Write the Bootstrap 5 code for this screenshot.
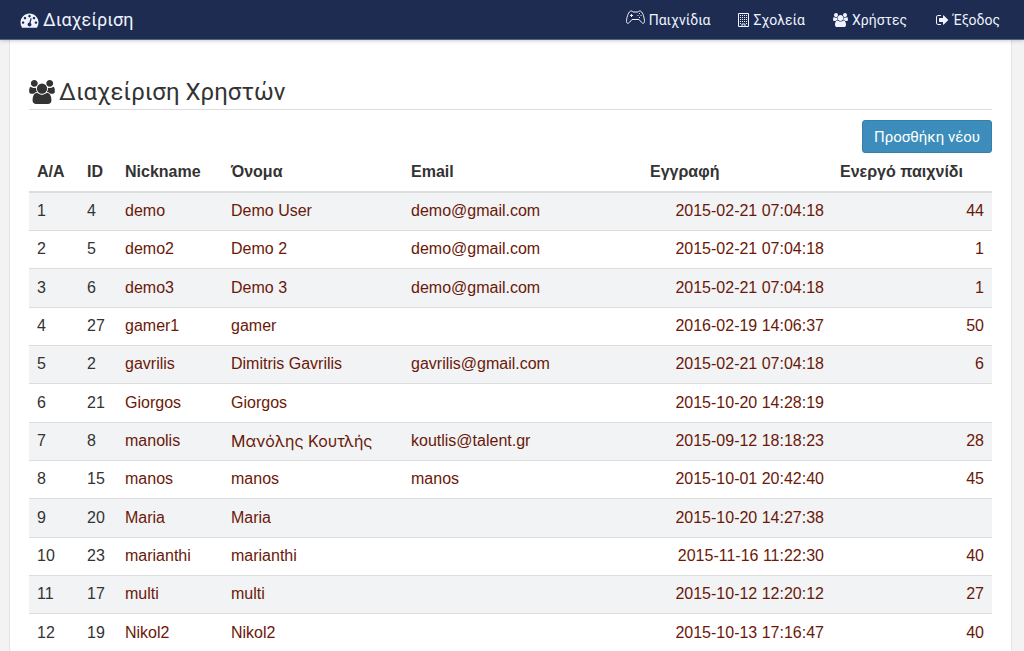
<!DOCTYPE html>
<html lang="el">
<head>
<meta charset="utf-8">
<meta name="viewport" content="width=device-width, initial-scale=1">
<title>Διαχείριση Χρηστών</title>
<link rel="stylesheet" href="https://cdn.jsdelivr.net/npm/bootstrap@5.3.0/dist/css/bootstrap.min.css">
<style>
body { background: #f3f3f3; color: #333; font: 16px/22px "Liberation Sans", Arial, sans-serif; }
svg { fill: currentColor; flex: none; }
.topbar { background: #1e2c52; height: 40px; border-bottom: 1px solid #56617f; box-shadow: 0 1px 4px rgba(0,0,0,.2); color: #eef3ff; font-family: Roboto, sans-serif; font-size: 14px; position: relative; padding: 0 24px 0 20px; }
.topbar a { color: inherit; text-decoration: none; }
.topbar .navbar-brand { font-size: 18px; line-height: 24px; }
.menu { gap: 28px; }
.sheet { background: #fff; margin: 0 12px 0 9px; padding: 35px 19px 0; border: solid #e4e4e4; border-width: 0 1px; min-height: 100vh; }
.title { font: 24px/34px Roboto, sans-serif; border-bottom: 1px solid #ddd; margin-bottom: 10px; }
.btn-add { --bs-btn-bg: #3c8dbc; --bs-btn-border-color: #367fa9; --bs-btn-color: #fff; --bs-btn-hover-color: #fff; --bs-btn-hover-bg: #367fa9; font: 15px/20px Roboto, sans-serif; padding: 6px 11px; border-radius: 3px; height: 33px; }
.users { table-layout: fixed; color: #333; --bs-table-striped-bg: #f1f3f5; --bs-table-striped-color: #333; --bs-table-color: #333; --bs-table-bg: transparent; }
.users th, .users td { padding: 0 8px; border-color: #ddd; vertical-align: middle; white-space: nowrap; }
.users thead th { height: 39px; border-bottom: 2px solid #ddd; }
.users tbody td { height: 38px; }
.users tbody tr:nth-child(3n) td { height: 39px; }
.users a { color: #6b1808; text-decoration: none; }
.users a:hover { text-decoration: underline; }
.users .greek { font-family: Inter, sans-serif; }
.c-no { width: 50px; } .c-id { width: 38px; } .c-nick { width: 106px; } .c-name { width: 180px; } .c-date { width: 190px; } .c-game { width: 160px; }
</style>
<script src="https://cdn.jsdelivr.net/npm/bootstrap@5.3.0/dist/js/bootstrap.bundle.min.js"></script>
</head>
<body>
<svg class="d-none" aria-hidden="true">
<symbol id="i-users" viewBox="0 0 1920 1792"><path d="M593 896q-162 5-265 128h-134q-82 0-138-40.5t-56-118.5q0-353 124-353 6 0 43.5 21t97.5 42.5 119 21.5q67 0 133-23-5 37-5 66 0 139 81 256zm1071 637q0 120-73 189.5t-194 69.5h-874q-121 0-194-69.5t-73-189.5q0-53 3.5-103.5t14-109 26.5-108.5 43-97.5 62-81 85.5-53.5 111.5-20q10 0 43 21.5t73 48 107 48 135 21.5 135-21.5 107-48 73-48 43-21.5q61 0 111.5 20t85.5 53.5 62 81 43 97.5 26.5 108.5 14 109 3.5 103.5zm-1024-1277q0 106-75 181t-181 75-181-75-75-181 75-181 181-75 181 75 75 181zm704 384q0 159-112.5 271.5t-271.5 112.5-271.5-112.5-112.5-271.5 112.5-271.5 271.5-112.5 271.5 112.5 112.5 271.5zm576 225q0 78-56 118.5t-138 40.5h-134q-103-123-265-128 81-117 81-256 0-29-5-66 66 23 133 23 59 0 119-21.5t97.5-42.5 43.5-21q124 0 124 353zm-128-609q0 106-75 181t-181 75-181-75-75-181 75-181 181-75 181 75 75 181z"/></symbol>
</svg>
<nav class="topbar navbar flex-nowrap">
  <a class="navbar-brand d-flex align-items-center gap-1 p-0 m-0" href="#">
    <svg width="19" height="18" viewBox="0 0 1792 1792" aria-hidden="true"><path d="M384 1152q0-53-37.500-90.500t-90.500-37.500-90.500 37.500-37.500 90.500 37.500 90.500 90.500 37.500 90.500-37.500 37.500-90.500zm192-448q0-53-37.500-90.500t-90.500-37.500-90.500 37.500-37.500 90.500 37.500 90.500 90.500 37.500 90.500-37.500 37.500-90.500zm428 481l101-382q6-26-7.500-48.500t-38.500-29.500-48 6.500-30 39.500l-101 382q-60 5-107 43.500t-63 98.500q-20 77 20 146t117 89 146-20 89-117q16-60-6-117t-72-91zm660-33q0-53-37.500-90.500t-90.500-37.500-90.500 37.500-37.500 90.500 37.500 90.500 90.500 37.500 90.500-37.500 37.500-90.500zm-640-640q0-53-37.500-90.500t-90.500-37.500-90.500 37.500-37.500 90.500 37.500 90.500 90.500 37.500 90.500-37.500 37.500-90.500zm448 192q0-53-37.500-90.500t-90.500-37.500-90.500 37.500-37.500 90.500 37.500 90.500 90.500 37.500 90.500-37.500 37.500-90.500zm320 448q0 261-141 483-19 29-54 29h-1402q-35 0-54-29-141-221-141-483 0-182 71-348t191-286 286-191 348-71 348 71 286 191 191 286 71 348z"/></svg>
    Διαχείριση</a>
  <div class="menu d-flex align-items-center">
    <a class="d-flex align-items-center gap-1" href="#"><svg class="mb-1" width="19" height="15" viewBox="0 0 19 15" aria-hidden="true"><path fill="none" stroke="currentColor" d="M4 1.500C5 .5 6 .8 7 2h5c1-1.200 2-1.500 3-.5 2 1 3.500 7 3.500 10 0 2-1.800 2.400-3 .8L13 9.500H6l-2.500 2.800C2.300 13.900.5 13.500.5 11.500c0-3 1.500-9 3.500-10z"/><path d="M4 5h1V4h1v1h1v1H6v1H5V6H4zM13 3h1v1h-1zM11.500 5h1v1h-1zM14.500 5h1v1h-1zM13 7h1v1h-1z"/></svg>Παιχνίδια</a>
    <a class="d-flex align-items-center gap-1" href="#"><svg width="11" height="14" viewBox="0 0 11 14" aria-hidden="true"><path fill="none" stroke="currentColor" d="M.5.500h10v13H.5zM4 13.500V11h3v2.500"/><path d="M2 2h1v1H2zm2 0h1v1H4zm2 0h1v1H6zm2 0h1v1H8zM2 4h1v1H2zm2 0h1v1H4zm2 0h1v1H6zm2 0h1v1H8zM2 6h1v1H2zm2 0h1v1H4zm2 0h1v1H6zm2 0h1v1H8zM2 8h1v1H2zm2 0h1v1H4zm2 0h1v1H6zm2 0h1v1H8zM2 10h1v1H2zm6 0h1v1H8z"/></svg>Σχολεία</a>
    <a class="d-flex align-items-center gap-1" href="#"><svg width="15" height="14" aria-hidden="true"><use href="#i-users"/></svg>Χρήστες</a>
    <a class="d-flex align-items-center gap-1" href="#"><svg width="14" height="14" viewBox="0 0 1664 1792" aria-hidden="true"><path d="M704 1440q0 4 1 20t.5 26.500-3 23.500-10 19.500-20.500 6.500h-320q-119 0-203.500-84.500t-84.500-203.500v-704q0-119 84.500-203.500t203.500-84.500h320q13 0 22.500 9.500t9.500 22.500q0 4 1 20t.5 26.500-3 23.500-10 19.500-20.500 6.500h-320q-66 0-113 47t-47 113v704q0 66 47 113t113 47h312l11.500 1 11.500 3 8 5.500 7 9 2 13.500zm928-544q0 26-19 45l-544 544q-19 19-45 19t-45-19-19-45v-288h-448q-26 0-45-19t-19-45v-384q0-26 19-45t45-19h448v-288q0-26 19-45t45-19 45 19l544 544q19 19 19 45z"/></svg>Έξοδος</a>
  </div>
</nav>
<main class="sheet">
  <h1 class="title d-flex align-items-center gap-1"><svg width="26" height="24" aria-hidden="true"><use href="#i-users"/></svg>Διαχείριση Χρηστών</h1>
  <div class="d-flex justify-content-end"><button class="btn btn-add" type="button">Προσθήκη νέου</button></div>
  <table class="users table table-striped mb-0">
    <colgroup><col class="c-no"><col class="c-id"><col class="c-nick"><col class="c-name"><col><col class="c-date"><col class="c-game"></colgroup>
    <thead><tr><th>A/A</th><th>ID</th><th>Nickname</th><th>Όνομα</th><th>Email</th><th>Εγγραφή</th><th>Ενεργό παιχνίδι</th></tr></thead>
    <tbody>
      <tr><td>1</td><td>4</td><td><a href="#">demo</a></td><td><a href="#">Demo User</a></td><td><a href="#">demo@gmail.com</a></td><td class="text-end"><a href="#">2015-02-21 07:04:18</a></td><td class="text-end"><a href="#">44</a></td></tr>
      <tr><td>2</td><td>5</td><td><a href="#">demo2</a></td><td><a href="#">Demo 2</a></td><td><a href="#">demo@gmail.com</a></td><td class="text-end"><a href="#">2015-02-21 07:04:18</a></td><td class="text-end"><a href="#">1</a></td></tr>
      <tr><td>3</td><td>6</td><td><a href="#">demo3</a></td><td><a href="#">Demo 3</a></td><td><a href="#">demo@gmail.com</a></td><td class="text-end"><a href="#">2015-02-21 07:04:18</a></td><td class="text-end"><a href="#">1</a></td></tr>
      <tr><td>4</td><td>27</td><td><a href="#">gamer1</a></td><td><a href="#">gamer</a></td><td></td><td class="text-end"><a href="#">2016-02-19 14:06:37</a></td><td class="text-end"><a href="#">50</a></td></tr>
      <tr><td>5</td><td>2</td><td><a href="#">gavrilis</a></td><td><a href="#">Dimitris Gavrilis</a></td><td><a href="#">gavrilis@gmail.com</a></td><td class="text-end"><a href="#">2015-02-21 07:04:18</a></td><td class="text-end"><a href="#">6</a></td></tr>
      <tr><td>6</td><td>21</td><td><a href="#">Giorgos</a></td><td><a href="#">Giorgos</a></td><td></td><td class="text-end"><a href="#">2015-10-20 14:28:19</a></td><td></td></tr>
      <tr><td>7</td><td>8</td><td><a href="#">manolis</a></td><td><a class="greek" href="#">Μανόλης Κουτλής</a></td><td><a href="#">koutlis@talent.gr</a></td><td class="text-end"><a href="#">2015-09-12 18:18:23</a></td><td class="text-end"><a href="#">28</a></td></tr>
      <tr><td>8</td><td>15</td><td><a href="#">manos</a></td><td><a href="#">manos</a></td><td><a href="#">manos</a></td><td class="text-end"><a href="#">2015-10-01 20:42:40</a></td><td class="text-end"><a href="#">45</a></td></tr>
      <tr><td>9</td><td>20</td><td><a href="#">Maria</a></td><td><a href="#">Maria</a></td><td></td><td class="text-end"><a href="#">2015-10-20 14:27:38</a></td><td></td></tr>
      <tr><td>10</td><td>23</td><td><a href="#">marianthi</a></td><td><a href="#">marianthi</a></td><td></td><td class="text-end"><a href="#">2015-11-16 11:22:30</a></td><td class="text-end"><a href="#">40</a></td></tr>
      <tr><td>11</td><td>17</td><td><a href="#">multi</a></td><td><a href="#">multi</a></td><td></td><td class="text-end"><a href="#">2015-10-12 12:20:12</a></td><td class="text-end"><a href="#">27</a></td></tr>
      <tr><td>12</td><td>19</td><td><a href="#">Nikol2</a></td><td><a href="#">Nikol2</a></td><td></td><td class="text-end"><a href="#">2015-10-13 17:16:47</a></td><td class="text-end"><a href="#">40</a></td></tr>
    </tbody>
  </table>
</main>
</body>
</html>
